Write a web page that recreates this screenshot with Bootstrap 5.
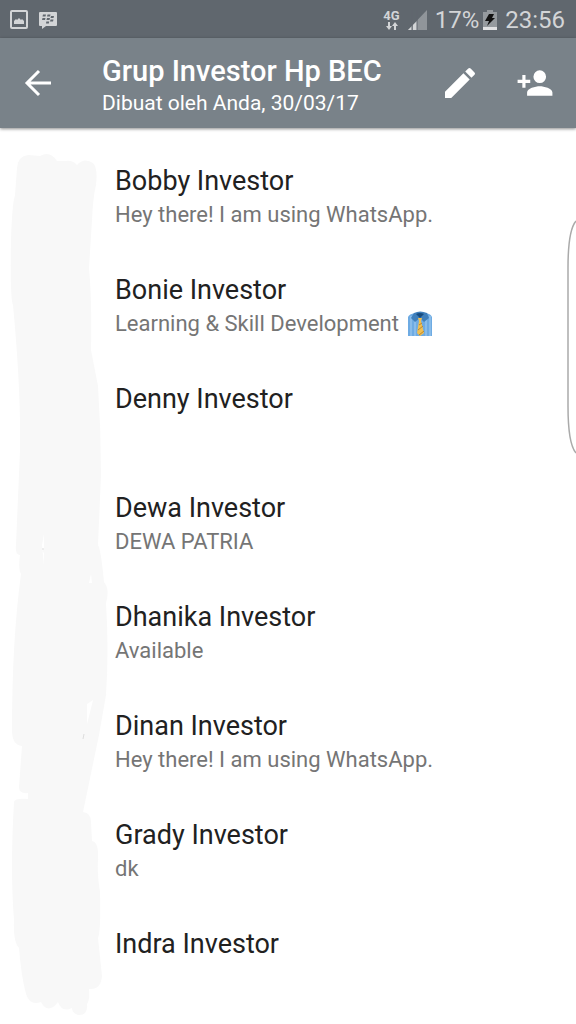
<!DOCTYPE html>
<html lang="id">
<head>
<meta charset="utf-8">
<meta name="viewport" content="width=device-width, initial-scale=1">
<title>Grup Investor Hp BEC</title>
<link href="https://cdn.jsdelivr.net/npm/bootstrap@5.3.0/dist/css/bootstrap.min.css" rel="stylesheet">
<style>
body { font-family: Roboto, "Noto Sans", sans-serif; background: #fff; }
svg { display: block; flex: none; }
.status-bar { background: #60676e; color: #d3d5d7; height: 38px; padding: 2px 11px 0 10px; font-size: 24px; line-height: 36px; }
.net-type { font-size: 13px; line-height: 12px; font-weight: 700; }
.app-bar { background: #798289; color: #fff; height: 90px; padding: 0 22px; box-shadow: 0 1px 3px rgba(0,0,0,.45); }
.icon-btn { color: #fff; border: 0; border-radius: 50%; line-height: 1; }
.group-title { font-size: 29px; line-height: 36px; font-weight: 500; }
.group-info { font-size: 21px; line-height: 28px; }
.members { padding: 35px 24px 24px 115px; }
.member-list { gap: 41px; }
.member { min-height: 68px; }
.member-name { font-size: 27px; line-height: 36px; font-weight: 400; color: #212121; }
.member-status { font-size: 22px; line-height: 32px; color: #757575; }
.brush { left: 0; top: 0; pointer-events: none; }
.edge-handle { right: 0; top: 92px; }
</style>
</head>
<body class="min-vh-100 d-flex flex-column">
<div class="status-bar d-flex align-items-center justify-content-between">
  <div class="d-flex align-items-center">
    <svg width="18" height="20" viewBox="0 0 18 20" role="img" aria-label="Gambar"><rect x="1" y="1" width="16" height="17" rx="1" fill="none" stroke="#d3d5d7" stroke-width="2"/><path d="M4 14v-3l2-2 1 1 2-2 2 2 1-1 2 2v3z" fill="#d3d5d7"/></svg>
    <svg class="ms-2" width="22" height="20" viewBox="-2 0 22 20" role="img" aria-label="BBM"><path d="M2 2h16q1 0 1 1v12q0 1-1 1H8l-4 3v-3H2q-1 0-1-1V3q0-1 1-1z" fill="#d3d5d7"/><g fill="#60676e"><path d="M5 4.500h3l-.5 2h-3zM9.500 4.500h3l-.5 2H9zM4.500 8h3L7 10H4zM9 8h3l-.5 2h-3zM13 6h3l-.5 2h-3zM12.500 9.500h3l-.5 2h-3zM8.300 11.500h3l-.5 2H8z"/></g></svg>
  </div>
  <div class="d-flex align-items-center">
    <div class="net-type d-flex flex-column align-items-center">4G
      <svg width="12" height="8" viewBox="0 0 12 8" fill="#d3d5d7"><path d="M2 0h2v4h2L3 8 0 4h2zM8 8h2V4h2L9 0 6 4h2z"/></svg>
    </div>
    <svg class="mx-2" width="19" height="20" viewBox="0 0 19 20"><path d="M0 20 19 0v20z" fill="#90959a"/><path d="M0 20l4-4v4zM5 15l4-4v9H5z" fill="#d3d5d7"/><path d="M4 0v20M9 0v20" stroke="#60676e"/></svg>
    <span>17%</span>
    <svg class="ms-1 me-2" width="14" height="20" viewBox="0 0 14 20"><path d="M4 0h6v2h4v18H0V2h4z" fill="#959a9e"/><path d="M0 17h14v3H0z" fill="#e1e2e3"/><path d="M6 4h5L9 8h3L4 16l2-5H2z" fill="#111"/></svg>
    <span>23:56</span>
  </div>
</div>
<header class="app-bar d-flex align-items-center position-relative">
  <button type="button" class="btn icon-btn p-0 me-4" aria-label="Kembali"><svg width="32" height="38" viewBox="0 0 32 38" fill="none" stroke="#fff" stroke-width="3"><path d="M29 19H6M17 7 5 19l12 12"/></svg></button>
  <div class="flex-grow-1 ms-4 pt-1">
    <h1 class="group-title m-0">Grup Investor Hp BEC</h1>
    <div class="group-info">Dibuat oleh Anda, 30/03/17</div>
  </div>
  <button type="button" class="btn icon-btn p-0 me-3" aria-label="Edit"><svg width="40" height="40" viewBox="0 0 24 24" fill="#fff"><path d="M3 17.250V21h3.750L17.810 9.940l-3.750-3.750L3 17.250zM20.710 7.040a1 1 0 0 0 0-1.410l-2.340-2.340a1 1 0 0 0-1.410 0l-1.830 1.830 3.750 3.750 1.830-1.830z"/></svg></button>
  <button type="button" class="btn icon-btn p-0 ms-3" aria-label="Tambah peserta"><svg class="ms-1" width="38" height="38" viewBox="0 0 24 24" fill="#fff"><path d="M15 12a4 4 0 1 0 0-8 4 4 0 0 0 0 8zm-9-2V7H4v3H1v2h3v3h2v-3h3v-2H6zm9 4c-2.670 0-8 1.340-8 4v2h16v-2c0-2.660-5.330-4-8-4z"/></svg></button>
</header>
<main class="members position-relative flex-grow-1">
  <svg class="brush position-absolute" width="115" height="896" viewBox="0 128 115 896" aria-hidden="true">
    <path fill="#f8f8f8" d="M17 168Q18 156 28 155L40 156Q50 150 57 161L66 161Q72 160 77 165Q84 157 93 163Q98 168 96 185Q93 197 92 220L89 268Q92 300 91 350L98 386Q101 430 101 475L98 545Q101 550 104 582Q110 589 106 603Q109 650 106 695L99 735 83 812Q91 813 91 822L92 841Q99 842 98 860Q97 873 100 892Q101 930 98 938L102 976Q101 990 89 989Q90 1000 87 1004Q88 1016 78 1015Q72 1013 72 1008Q62 1013 58 1002Q48 1015 41 1002Q30 1006 26 994Q21 975 19 948Q13 942 14 920Q10 870 14 802Q15 798 28 799L28 793Q19 794 19 787L22 746Q12 745 12 730Q12 640 21 574Q18 569 20 555Q15 555 16 545L20 450Q21 390 13 305Q10 300 11 240Q12 205 15 195Z"/>
    <path fill="#fff" d="M44 534v15l-2 2 2 2v12l-2-20zM91 574l1 9h-3zM87 704l6-4-6 24z"/>
    <path d="M42 549h2M84 734l-1 5" stroke="#ddd"/>
  </svg>
  <ul class="member-list list-unstyled d-flex flex-column m-0 position-relative">
    <li class="member"><h2 class="member-name m-0">Bobby Investor</h2><div class="member-status">Hey there! I am using WhatsApp.</div></li>
    <li class="member"><h2 class="member-name m-0">Bonie Investor</h2><div class="member-status d-flex align-items-center">Learning &amp; Skill Development
      <svg class="ms-2" width="26" height="26" viewBox="0 0 26 26" role="img" aria-label="Kemeja dan dasi"><path d="M1 6Q2 3 8 2h11q5 1 6 4v19H1z" fill="#6eabe3"/><path d="M4 5v20M8 8v17M19 8v17M23 5v20" stroke="#a3cdf0" stroke-width="1"/><path d="M7 2q6-3 13 0l2 5-5 4-4-4-5 4-4-4z" fill="#3f7fbb"/><path d="M9 3q4-2 8 0l-4 4z" fill="#174c80"/><path d="M11 7h4l-1 3 3 12-4 3-3-3 2-12z" fill="#f1bf50"/><path d="M12 14l3-2M11 19l5-4M12 24l5-4" stroke="#b98630"/></svg></div></li>
    <li class="member"><h2 class="member-name m-0">Denny Investor</h2></li>
    <li class="member"><h2 class="member-name m-0">Dewa Investor</h2><div class="member-status">DEWA PATRIA</div></li>
    <li class="member"><h2 class="member-name m-0">Dhanika Investor</h2><div class="member-status">Available</div></li>
    <li class="member"><h2 class="member-name m-0">Dinan Investor</h2><div class="member-status">Hey there! I am using WhatsApp.</div></li>
    <li class="member"><h2 class="member-name m-0">Grady Investor</h2><div class="member-status">dk</div></li>
    <li class="member"><h2 class="member-name m-0">Indra Investor</h2></li>
  </ul>
  <svg class="edge-handle position-absolute" width="9" height="234" viewBox="0 0 9 234" fill="none" stroke="#aaa" stroke-width="1.500" aria-hidden="true"><path d="M9 1Q1 10 1 48V186Q1 224 9 233"/></svg>
</main>
<script src="https://cdn.jsdelivr.net/npm/bootstrap@5.3.0/dist/js/bootstrap.bundle.min.js"></script>
</body>
</html>
